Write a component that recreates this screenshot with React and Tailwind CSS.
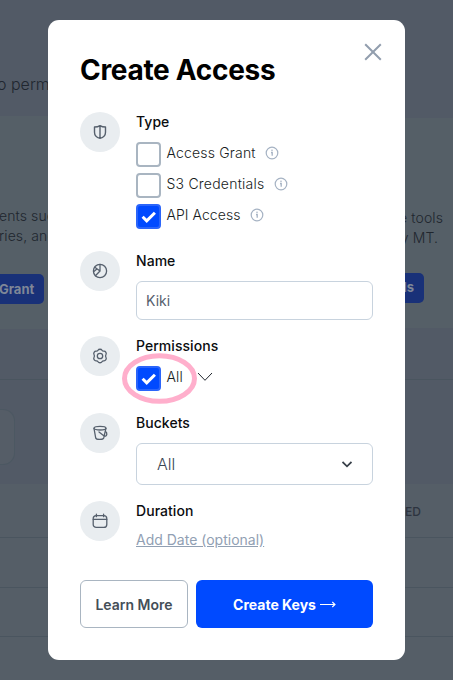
import React from "react";

const iconProps = {
  width: 16,
  height: 16,
  viewBox: "0 0 16 16",
  fill: "none",
  stroke: "#56606d",
  strokeWidth: 1.2,
  strokeLinecap: "round",
  strokeLinejoin: "round",
};

function ShieldIcon() {
  return (
    <svg {...iconProps} strokeWidth={1.4}>
      <path d="M8 1.6C6.6 2.5 4.6 3 2.5 3V8.2C2.5 11.6 4.8 13.5 8 14.4C11.2 13.5 13.5 11.6 13.5 8.2V3C11.4 3 9.4 2.5 8 1.6ZM8 1.6V14.2" />
    </svg>
  );
}

function PieIcon() {
  return (
    <svg {...iconProps} strokeWidth={1.3}>
      <circle cx="8" cy="8" r="6.6" />
      <path d="M8 1.4V8L3.4 12.8M8 8L2.8 4.2M1.6 8.8L4.9 6" />
    </svg>
  );
}

function GearIcon() {
  return (
    <svg {...iconProps} strokeWidth={1.3}>
      <path d="M6 2.3C6.7 .9 9.3 .9 10 2.3C10.4 3.1 11 3.3 12 3.2C13.6 3.2 14.8 5.2 14 6.5C13.4 7.5 13.4 8.5 14 9.5C14.8 10.8 13.6 12.8 12 12.8C11 12.7 10.4 12.9 10 13.7C9.3 15.1 6.7 15.1 6 13.7C5.6 12.9 5 12.7 4 12.8C2.4 12.8 1.2 10.8 2 9.5C2.6 8.5 2.6 7.5 2 6.5C1.2 5.2 2.4 3.2 4 3.2C5 3.3 5.6 3.1 6 2.3Z" />
      <circle cx="8" cy="8" r="2.7" />
    </svg>
  );
}

function BucketIcon() {
  return (
    <svg {...iconProps} strokeWidth={1.3}>
      <ellipse cx="8" cy="3.2" rx="6" ry="1.8" />
      <path d="M2 3.3L3.7 13C4.2 14.9 11.2 14.9 11.7 13L13.9 3.3M7 7L11.8 10.8C13 11.7 14.6 11 14.8 9.4C15 8 14.5 7 13.3 6.3" />
    </svg>
  );
}

function CalendarIcon() {
  return (
    <svg {...iconProps} strokeWidth={1.3}>
      <rect x="1.2" y="2.7" width="13.6" height="11.7" rx="3" />
      <path d="M1.2 6.3H14.8M4.4 1.2V3.7M11.6 1.2V3.7" />
    </svg>
  );
}

function InfoIcon() {
  return (
    <svg width="14" height="14" viewBox="0 0 14 14" fill="none" stroke="#a5b2c3" className="shrink-0">
      <circle cx="7" cy="7" r="5.8" strokeWidth="1.2" />
      <path d="M6 6.5H7.2V9.8" strokeWidth="1.3" />
      <circle cx="7" cy="4.3" r=".8" fill="#a5b2c3" stroke="none" />
    </svg>
  );
}

function Checkbox({ checked }) {
  if (!checked) {
    return <span className="h-[25px] w-[25px] shrink-0 rounded-[4px] border-2 border-[#a9b5c1] bg-white" />;
  }
  return (
    <span className="flex h-[25px] w-[25px] shrink-0 items-center justify-center rounded-[4px] border-2 border-[#2b65fa] bg-[#004aff]">
      <svg width="21" height="21" viewBox="0 0 21 21" fill="none" stroke="white" strokeWidth="3">
        <path d="M4.6 10.8L8.7 14.9L16.9 6.7" />
      </svg>
    </span>
  );
}

function Option({ label, checked, info, tracking = "tracking-[0.18px]" }) {
  return (
    <div className="flex h-[25px] items-center">
      <Checkbox checked={checked} />
      <span className={"-mt-[3px] ml-[5.5px] mr-[9.5px] whitespace-nowrap text-[14px] font-light leading-5 text-[#171c22] " + tracking}>
        {label}
      </span>
      {info && <span className="-mt-[3px]"><InfoIcon /></span>}
    </div>
  );
}

function Section({ icon, title, className, children }) {
  return (
    <section className={"flex shrink-0 gap-4 " + className}>
      <div className="flex h-10 w-10 shrink-0 items-center justify-center rounded-full bg-[#e9edf0]">{icon}</div>
      <div className="flex w-[237px] flex-col items-start">
        <h2 className="h-5 text-[14px] font-medium leading-5 tracking-[0.05px] text-[#0b0d10]">{title}</h2>
        {children}
      </div>
    </section>
  );
}

function Backdrop() {
  return (
    <div className="flex h-full flex-col bg-[#525a66]">
      <div className="h-[116px] shrink-0 pt-[72px]">
        <p className="-ml-[3px] text-[16px] font-light leading-6 text-[#20262f]">o perm</p>
      </div>
      <div className="flex h-[264px] shrink-0 justify-between border-b border-[#4a555f]">
        <div className="h-[213px] w-[200px] bg-[#555f67] pt-[90px]">
          <p className="whitespace-nowrap text-[14px] font-light leading-5 tracking-[0.1px] text-[#20262e]">
            <span className="-ml-[1px]">ents suc</span>
            <br />
            <span className="-ml-[1px]">ries, and</span>
          </p>
          <div className="mt-[28px] flex h-[30px] w-[44px] items-center rounded-r-[5px] bg-[#193178] text-[13px] font-bold text-[#7f8797]">
            <span className="-ml-[1px] pt-[2px]">Grant</span>
          </div>
        </div>
        <div className="mt-[2px] flex h-[210px] w-[200px] flex-col items-end bg-[#555f67] pt-[90px]">
          <p className="whitespace-nowrap text-[14px] font-light leading-5 tracking-[0.1px] text-[#20262e]">
            <span className="mr-[10px] block text-right">e tools</span>
            <span className="mr-[15px] block text-right">y MT.</span>
          </p>
          <div className="mr-[29px] mt-[25px] flex h-[30px] w-[90px] items-center justify-end rounded-[5px] bg-[#193178] pr-[10px] text-[13px] font-bold text-[#7f8797]">
            ls
          </div>
        </div>
      </div>
      <div className="h-[104px] shrink-0 pt-[29px]">
        <div className="h-[56px] w-[15px] rounded-r-[12px] border border-l-0 border-[#4c5862] bg-[#555d67]" />
      </div>
      <div className="flex grow flex-col bg-[#555e67]">
        <div className="flex h-[54px] shrink-0 items-center justify-end border-b border-[#4a555f] pr-[32px] pt-[3px] text-[12px] font-medium text-[#2d343f]">
          ED
        </div>
        <div className="h-[50px] shrink-0 border-b border-[#4a555f]" />
        <div className="h-[49px] shrink-0 border-b border-[#4a555f]" />
      </div>
    </div>
  );
}

export default function App() {
  return (
    <div className="relative h-[680px] w-[453px] overflow-hidden font-['Inter',sans-serif]">
      <Backdrop />
      <div className="absolute left-[48px] top-[20px] flex h-[640px] w-[357px] flex-col rounded-[11px] bg-white px-8">
        <header className="flex h-[92px] shrink-0 items-start justify-between">
          <h1 className="mt-[32px] whitespace-nowrap text-[28px] font-bold leading-9 tracking-[-0.3px] text-black">
            Create Access
          </h1>
          <svg width="18" height="18" viewBox="0 0 18 18" stroke="#929eae" strokeWidth="2" className="-mr-[9px] mt-[23px]">
            <path d="M1.2 1.2L16.8 16.8M16.8 1.2L1.2 16.8" />
          </svg>
        </header>

        <Section icon={<ShieldIcon />} title="Type" className="h-[139px]">
          <div className="mt-[10px] flex flex-col gap-[6px]">
            <Option label="Access Grant" info />
            <Option label="S3 Credentials" info tracking="tracking-[0.22px]" />
            <Option label="API Access" info checked tracking="tracking-[0.06px]" />
          </div>
        </Section>

        <Section icon={<PieIcon />} title="Name" className="h-[85px]">
          <div className="mt-[10px] flex h-[39px] w-full items-center rounded-[6px] border border-[#c8d3de] pl-[9px] text-[14px] text-[#56606d]">
            Kiki
          </div>
        </Section>

        <Section icon={<GearIcon />} title="Permissions" className="h-[77px]">
          <div className="relative mt-[10px] flex items-center">
            <Option label="All" checked />
            <svg width="16" height="10" viewBox="0 0 16 10" fill="none" stroke="#20262d" strokeWidth="1" className="-mt-[3px] ml-[4px]">
              <path d="M1 1L8 8.3L15 1" />
            </svg>
            <svg width="76" height="52" viewBox="0 0 76 52" fill="none" className="absolute -left-[14px] -top-[14px]">
              <ellipse cx="37.5" cy="26.5" rx="35" ry="22.8" stroke="#ffafcc" strokeWidth="5" />
            </svg>
          </div>
        </Section>

        <Section icon={<BucketIcon />} title="Buckets" className="h-[88px]">
          <div className="mt-[10px] flex h-[42px] w-full items-center justify-between rounded-[6px] border border-[#c8d3de] pl-5 pr-5 text-[16px] font-light text-[#3b4553]">
            All
            <svg width="10" height="7" viewBox="0 0 10 7" fill="none" stroke="#384049" strokeWidth="1.8">
              <path d="M.5 1L5 5.3L9.5 1" />
            </svg>
          </div>
        </Section>

        <Section icon={<CalendarIcon />} title="Duration" className="h-[79px]">
          <a className="mt-[9px] whitespace-nowrap text-[14px] leading-5 text-[#91a0b3] underline">Add Date (optional)</a>
        </Section>

        <footer className="flex h-12 shrink-0 gap-2">
          <button className="flex w-[108px] items-center justify-center whitespace-nowrap rounded-[6px] border border-[#a9b5c1] text-[14px] font-semibold text-[#444e58]">
            Learn More
          </button>
          <button className="flex w-[177px] items-center justify-center gap-1 whitespace-nowrap rounded-[6px] bg-[#004aff] text-[14px] font-bold text-white">
            Create Keys
            <svg width="16" height="8" viewBox="0 0 16 8" fill="none" stroke="white" strokeWidth="1.1">
              <path d="M0 4.5H15M12.3 2L15 4.5L12.3 7" />
            </svg>
          </button>
        </footer>
      </div>
    </div>
  );
}
